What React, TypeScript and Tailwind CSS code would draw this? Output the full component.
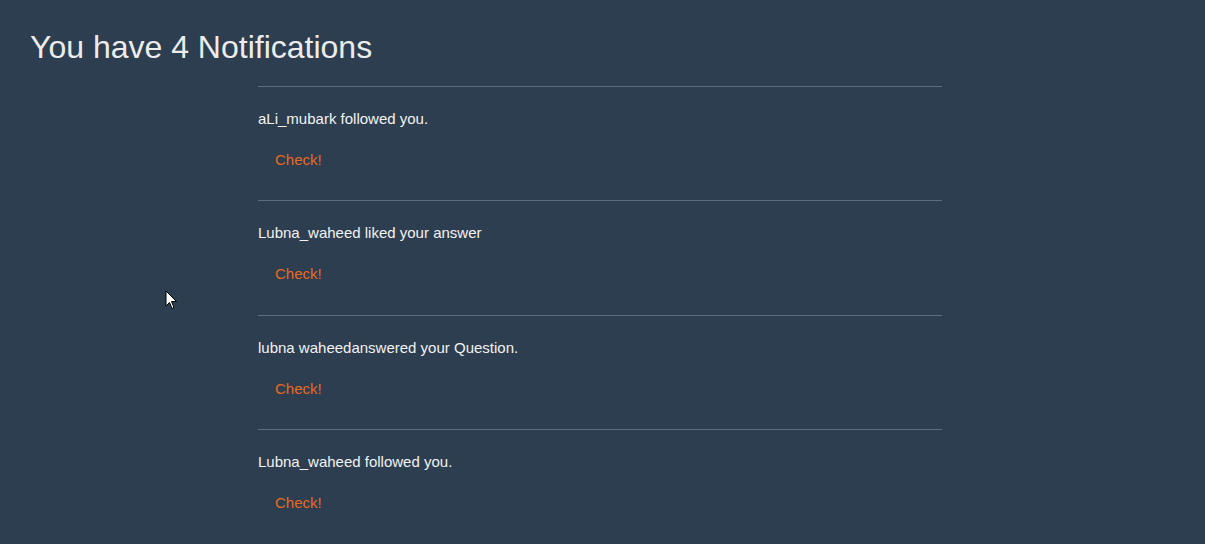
const notifications = [
  "aLi_mubark followed you.",
  "Lubna_waheed liked your answer",
  "lubna waheedanswered your Question.",
  "Lubna_waheed followed you.",
];

function Cursor() {
  return (
    <svg className="absolute left-[165px] top-[290px]" width="13" height="20" viewBox="0 0 13 20">
      <path d="M1 1 L1 16 L4.5 12.5 L7 18.5 L9 17.5 L6.5 11.5 L11.5 11.5 Z" fill="#fff" stroke="#000" strokeWidth="1" strokeLinejoin="miter" />
    </svg>
  );
}

export default function App() {
  return (
    <div className="relative min-h-[544px] w-full bg-[#2c3e50] font-['Liberation_Sans',Arial,sans-serif] overflow-hidden">
      <h1 className="pl-[30px] pt-[29px] text-[32px] leading-[36px] text-[#ececec]">
        You have {notifications.length} Notifications
      </h1>
      <div className="ml-[258px] mt-[21px] w-[684px]">
        {notifications.map((n, i) => (
          <div key={i} className="border-t border-[#5d6d7e] pt-[22px] pb-[30.4px]">
            <p className="text-[15px] leading-[20px] text-[#f2f2f2]">{n}</p>
            <a href="#" className="mt-[21px] block pl-[17px] text-[15px] leading-[20px] text-[#e8691e]">
              Check!
            </a>
          </div>
        ))}
      </div>
      <Cursor />
    </div>
  );
}
